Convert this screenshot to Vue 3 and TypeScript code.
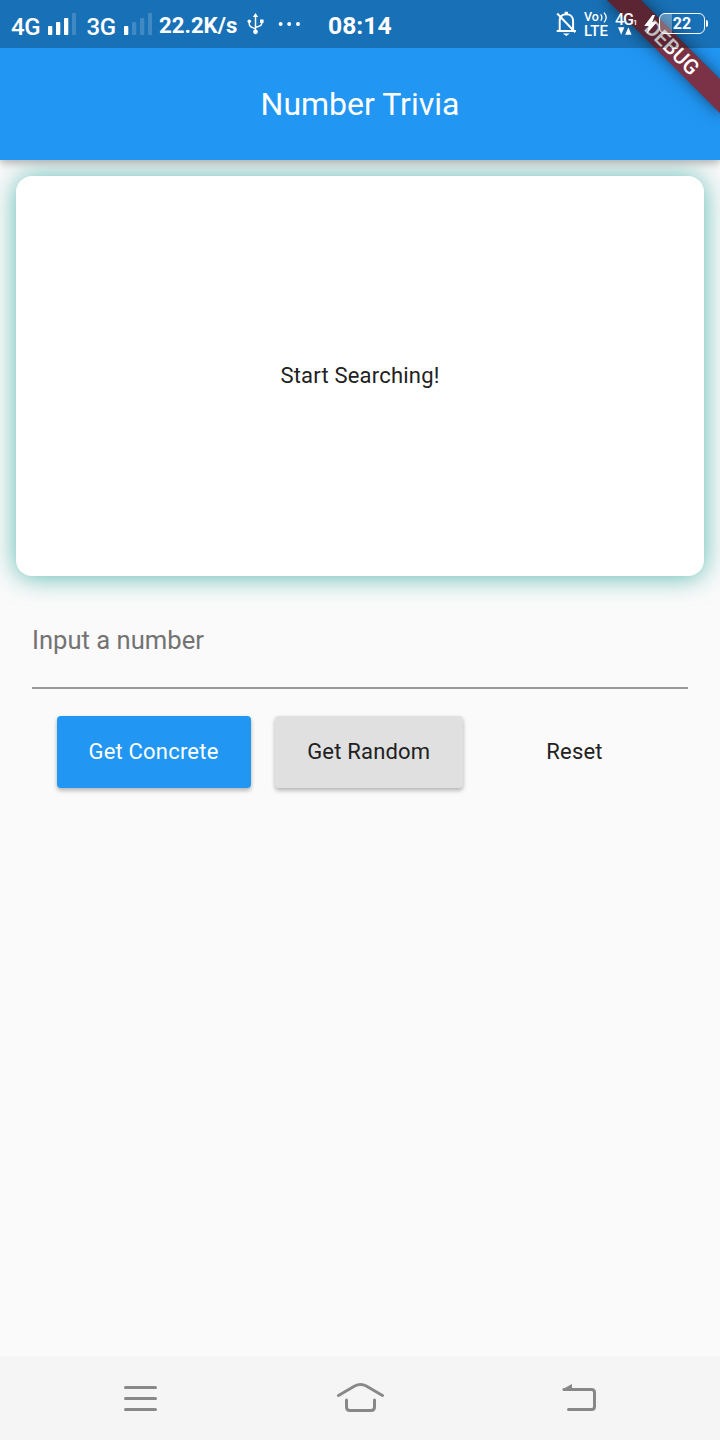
<script setup lang="ts">
import { ref } from 'vue'

const message = ref('Start Searching!')
const signals = [
  { label: '4G', active: 3 },
  { label: '3G', active: 1 },
]
</script>

<template>
  <div class="screen">
    <div class="status">
      <div v-for="s in signals" :key="s.label" class="signal">
        <span class="net">{{ s.label }}</span>
        <svg width="28" height="22" viewBox="0 0 28 22">
          <rect
            v-for="n in 4"
            :key="n"
            :x="(n - 1) * 8"
            :y="n === 4 ? 0 : 13 - (n - 1) * 4"
            width="4.3"
            :height="n === 4 ? 22 : 9 + (n - 1) * 4"
            rx=".8"
            fill="#fff"
            :opacity="n <= s.active ? 1 : 0.18"
          />
        </svg>
      </div>
      <span class="speed">22.2K/s</span>
      <svg class="usb" width="17" height="22" viewBox="0 0 17 22" fill="none" stroke="#fff" stroke-width="1.5">
        <path d="M8.5 3v16M2.3 8.5v2.8q0 2.6 6.2 4.5M14.7 8v2.5q0 2.5-6.2 3.8" />
        <path d="M8.5 0 5.8 4h5.4z" fill="#fff" stroke="none" />
        <circle cx="8.5" cy="18.8" r="2.4" fill="#fff" stroke="none" />
        <circle cx="2.3" cy="8.3" r="1.8" fill="#fff" stroke="none" />
        <path d="M13 6.5h3.6v3.4H13z" fill="#fff" stroke="none" />
      </svg>
      <svg class="dots" width="23" height="4" viewBox="0 0 23 4" fill="#fff">
        <circle cx="2.6" cy="2" r="2" />
        <circle cx="11.2" cy="2" r="2" />
        <circle cx="20" cy="2" r="2" />
      </svg>
      <span class="clock">08:14</span>
      <div class="right">
        <svg class="bell" width="21" height="25" viewBox="0 0 21 25" fill="none" stroke="#fff" stroke-width="2">
          <path d="M3.7 19V10C3.7 6 6 3.2 10.3 3.2s6.8 2.8 6.8 6.8V19M.7 20h19.2M8.6 1.7h3.4M1.2 2.5l18 18.8" />
          <path d="M6.8 22.5h7L10.3 25z" fill="#fff" stroke="none" />
        </svg>
        <div class="volte">
          <div class="vo">
            <span>Vo</span>
            <svg width="8" height="11" viewBox="0 0 8 11" fill="none" stroke="#fff" stroke-width="1.3">
              <path d="M.7 2.3q2.4 3.2 0 6.4M4 .6q4.4 4.9 0 9.8" />
            </svg>
          </div>
          <span class="lte">LTE</span>
        </div>
        <div class="data">
          <div class="data-label">4G<small>1</small></div>
          <svg width="14" height="8" viewBox="0 0 14 8" fill="#fff">
            <path d="M0 .3h6.4L3.2 7.7zM7.2 7.7h6.4L10.4.3z" />
          </svg>
        </div>
        <svg class="bolt" width="13" height="19" viewBox="0 0 13 19" fill="#fff">
          <path d="M8.5 0 .2 11h4.6L2.8 18.8 12.8 7.3H8.2L11 0z" />
        </svg>
        <div class="battery">22</div>
        <div class="battery-tip"></div>
      </div>
    </div>

    <header class="appbar">Number Trivia</header>
    <div class="ribbon-clip"><div class="ribbon">DEBUG</div></div>

    <main>
      <section class="card"><span>{{ message }}</span></section>
      <div class="field"><span>Input a number</span></div>
      <div class="actions">
        <button class="btn primary">Get Concrete</button>
        <button class="btn neutral">Get Random</button>
        <button class="btn flat">Reset</button>
      </div>
    </main>

    <nav class="nav">
      <svg width="33" height="27" viewBox="0 0 33 27" fill="none" stroke="#888" stroke-width="3" stroke-linecap="round">
        <path d="M1.5 2.5h30M1.5 13.5h30M1.5 24.5h30" />
      </svg>
      <svg class="home" width="48" height="30" viewBox="0 0 48 30" fill="none" stroke="#888" stroke-width="3" stroke-linecap="round">
        <path d="M1.5 13.5 17.7 4Q23.5 .9 29.3 4L45.5 13.5" />
        <path d="M9.5 18v7q0 3.5 3.5 3.5h21q3.5 0 3.5-3.5v-7" />
      </svg>
      <svg class="back" width="35" height="29" viewBox="0 0 35 29" fill="none" stroke="#888" stroke-width="3" stroke-linecap="round">
        <path d="M2 5.5h27.5q3 0 3 3v14q0 3-3 3h-23" />
        <path d="M0 5.5 10 0v5.5z" fill="#888" stroke="none" />
      </svg>
    </nav>
  </div>
</template>

<style>
body {
  margin: 0;
}
</style>

<style scoped>
.screen {
  position: relative;
  width: 720px;
  height: 1440px;
  display: flex;
  flex-direction: column;
  overflow: hidden;
  background: #fafafa;
  font-family: Roboto, sans-serif;
  color: #212121;
}
.status {
  position: relative;
  z-index: 4;
  height: 48px;
  flex: none;
  display: flex;
  align-items: flex-start;
  box-sizing: border-box;
  padding-left: 11px;
  background: rgba(0, 0, 0, 0.25);
  color: #fff;
  white-space: nowrap;
}
.signal {
  width: 75.5px;
  flex: none;
  display: flex;
  padding-top: 13px;
}
.net {
  width: 37px;
  font-size: 24px;
  line-height: 29px;
  font-weight: 500;
  letter-spacing: -0.5px;
}
.speed {
  width: 88px;
  margin-left: -3px;
  margin-top: 11px;
  font-size: 22.2px;
  line-height: 28px;
  font-weight: 700;
}
.usb {
  margin-top: 13px;
}
.dots {
  margin: 22px 0 0 14px;
}
.clock {
  margin: 11px 0 0 27px;
  font-size: 24.7px;
  line-height: 30px;
  font-weight: 700;
}
.right {
  margin-left: auto;
  display: flex;
  align-items: flex-start;
  width: 164px;
  padding-top: 11px;
}
.bell {
  flex: none;
}
.volte {
  width: 31px;
  margin-left: 7px;
  flex: none;
}
.vo {
  display: flex;
  align-items: center;
  height: 12px;
  font-size: 12.5px;
  font-weight: 500;
  line-height: 12px;
  gap: 1px;
}
.lte {
  display: block;
  margin-top: 1px;
  font-size: 15px;
  line-height: 15px;
  font-weight: 500;
  letter-spacing: 0.1px;
}
.data {
  width: 29px;
  flex: none;
}
.data-label {
  font-size: 16px;
  line-height: 17px;
  height: 16px;
  font-weight: 500;
  letter-spacing: -1px;
}
.data-label small {
  font-size: 8px;
  font-weight: 500;
}
.data svg {
  display: block;
  margin-left: 3px;
}
.bolt {
  margin-top: 4px;
  flex: none;
}
.battery {
  box-sizing: border-box;
  width: 46px;
  height: 21px;
  margin: 2px 0 0 2px;
  border: 1.5px solid #fff;
  border-radius: 6px;
  background: linear-gradient(90deg, rgba(255, 255, 255, 0.3) 12px, transparent 12px);
  font-size: 16px;
  line-height: 19px;
  font-weight: 700;
  text-align: center;
  flex: none;
}
.battery-tip {
  width: 2px;
  height: 7px;
  margin: 9px 0 0 1px;
  background: #fff;
  border-radius: 0 2px 2px 0;
}
.appbar {
  position: relative;
  z-index: 2;
  box-sizing: border-box;
  height: 160px;
  margin-top: -48px;
  padding-top: 48px;
  flex: none;
  background: #2196f3;
  color: #fff;
  font-size: 32px;
  line-height: 112px;
  text-align: center;
  box-shadow: 0 3px 7px rgba(0, 0, 0, 0.2), 0 4px 12px rgba(0, 0, 0, 0.1);
  clip-path: inset(0 0 -16px 0);
}
.ribbon-clip {
  position: absolute;
  z-index: 3;
  top: 0;
  right: 0;
  width: 160px;
  height: 160px;
  overflow: hidden;
}
.ribbon {
  position: absolute;
  left: 80px;
  top: 56px;
  width: 160px;
  height: 24px;
  transform: rotate(45deg);
  transform-origin: 80px -56px;
  background: linear-gradient(rgba(183, 28, 28, 0.63), rgba(183, 28, 28, 0.63)), rgba(0, 0, 0, 0.42);
  box-shadow: 0 0 16px rgba(0, 0, 0, 0.5);
  color: #fff;
  font-size: 21px;
  line-height: 24px;
  font-weight: 500;
  text-align: center;
}
main {
  flex: 1;
  display: flex;
  flex-direction: column;
  padding: 16px 16px 0;
}
.card {
  height: 400px;
  flex: none;
  text-align: center;
  line-height: 400px;
  border-radius: 16px;
  background: #fff;
  box-shadow: 0 1px 26px rgba(0, 150, 136, 0.65);
  font-size: 22px;
  letter-spacing: 0.2px;
}
.field {
  height: 111px;
  margin: 0 16px;
  border-bottom: 2px solid #999;
  color: #737373;
  font-size: 25.6px;
  line-height: 128px;
}
.actions {
  display: flex;
  gap: 24px;
  padding: 27px 0 0 40.5px;
}
.btn {
  height: 72px;
  padding: 0 0 2px;
  border: 0;
  border-radius: 4px;
  font-family: inherit;
  font-size: 22px;
  letter-spacing: 0.2px;
  color: #212121;
}
.primary {
  width: 194px;
  background: #2196f3;
  color: #fff;
}
.neutral {
  width: 188.5px;
  background: #e0e0e0;
}
.primary,
.neutral {
  box-shadow: 0 3px 4px rgba(0, 0, 0, 0.21), 0 1px 4px rgba(0, 0, 0, 0.1);
}
.flat {
  width: 175px;
  background: transparent;
}
.nav {
  height: 84px;
  flex: none;
  display: flex;
  align-items: flex-start;
  box-sizing: border-box;
  padding: 29px 0 0 124px;
  background: #f5f5f5;
}
.home {
  margin: -3px 0 0 180px;
}
.back {
  margin: -1px 0 0 177px;
}
</style>
